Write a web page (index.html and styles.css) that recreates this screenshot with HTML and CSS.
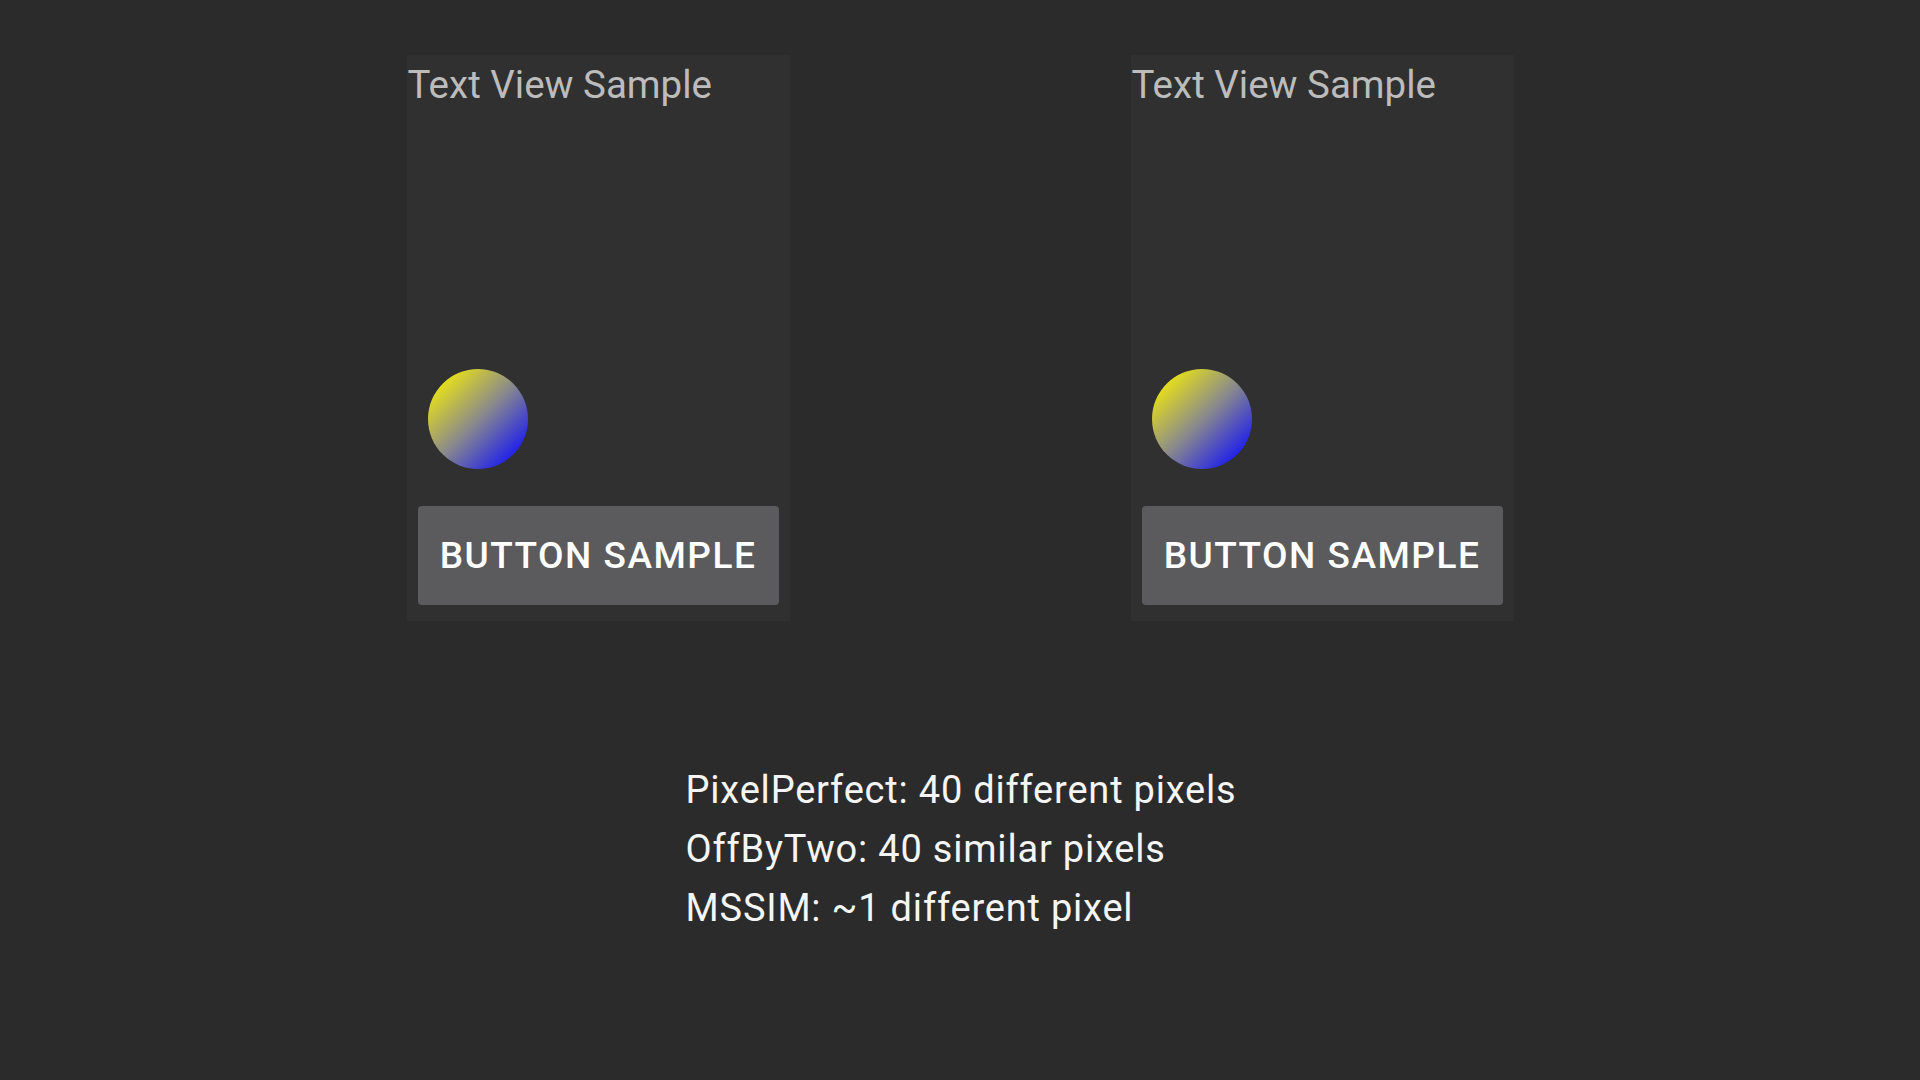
FILE: index.html
```html
<!DOCTYPE html>
<html>
<head>
  <title>Screenshot Comparison</title>
  <link rel="stylesheet" href="styles.css">
</head>
<body>
  <div class="screens">
    <div class="screen">
      <div class="text-view">Text View Sample</div>
      <div class="spacer"></div>
      <div class="ball"></div>
      <div class="sample-button">BUTTON SAMPLE</div>
    </div>
    <div class="screen">
      <div class="text-view">Text View Sample</div>
      <div class="spacer"></div>
      <div class="ball"></div>
      <div class="sample-button">BUTTON SAMPLE</div>
    </div>
  </div>

  <div class="results">
    <div class="result-lines">
      <div>PixelPerfect: 40 different pixels</div>
      <div>OffByTwo: 40 similar pixels</div>
      <div>MSSIM: ~1 different pixel</div>
    </div>
  </div>
</body>
</html>
```

FILE: styles.css
```css
html, body {
  margin: 0;
  height: 100%;
}

body {
  background-color: #2b2b2b;
  font-family: Roboto, "Liberation Sans", sans-serif;
  color: #f5f5f5;
}

.screens {
  display: flex;
  justify-content: center;
  gap: 341px;
  padding-top: 55px;
}

.screen {
  display: flex;
  flex-direction: column;
  width: 383px;
  height: 566px;
  background-color: #303030;
  padding-left: 1px;
  box-sizing: border-box;
}

.text-view {
  font-size: 38.5px;
  line-height: 47px;
  margin-top: 6px;
  color: #bcbcbc;
}

.spacer {
  flex: 1;
}

.ball {
  width: 100px;
  height: 100px;
  border-radius: 50%;
  margin-left: 20px;
  margin-bottom: 37px;
  background: linear-gradient(135deg, #e2dc1e 15%, #8a8a8c 50%, #2424e8 85%);
}

.sample-button {
  height: 99px;
  margin: 0 11px 16px 10px;
  border-radius: 4px;
  background-color: #5b5b5d;
  color: #ffffff;
  font-size: 37px;
  font-weight: 500;
  letter-spacing: 1.5px;
  display: flex;
  align-items: center;
  justify-content: center;
}

.results {
  display: flex;
  justify-content: center;
  margin-top: 140px;
}

.result-lines {
  font-size: 38px;
  line-height: 59px;
  letter-spacing: 0.8px;
  padding-left: 2px;
}
```
